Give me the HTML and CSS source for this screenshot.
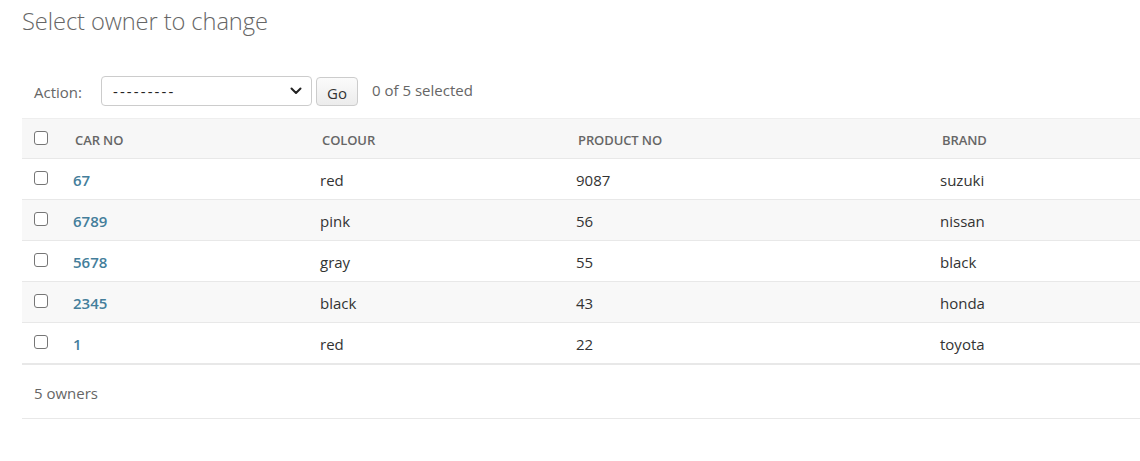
FILE: index.html
```html
<!DOCTYPE html>
<html lang="en">
<head>
<meta charset="utf-8">
<title>Select owner to change</title>
<link rel="stylesheet" href="styles.css">
</head>
<body>
<div class="content">
  <h1 class="title">Select owner to change</h1>
  <div class="changelist">
    <div class="actions">
      <label class="action-label">Action:</label>
      <div class="select">
        <span class="select-text">---------</span>
        <svg class="chev" width="12" height="8" viewBox="0 0 12 8"><path d="M1.5 1.5 L6 6 L10.5 1.5" fill="none" stroke="#222" stroke-width="2" stroke-linecap="round" stroke-linejoin="round"/></svg>
      </div>
      <button class="go">Go</button>
      <span class="counter">0 of 5 selected</span>
    </div>
    <table class="results">
      <thead>
        <tr>
          <th class="c-check"><span class="cb"></span></th>
          <th class="c-car">CAR NO</th>
          <th class="c-colour">COLOUR</th>
          <th class="c-product">PRODUCT NO</th>
          <th class="c-brand">BRAND</th>
        </tr>
      </thead>
      <tbody>
        <tr><td class="c-check"><span class="cb"></span></td><td><a class="link">67</a></td><td>red</td><td>9087</td><td>suzuki</td></tr>
        <tr class="alt"><td class="c-check"><span class="cb"></span></td><td><a class="link">6789</a></td><td>pink</td><td>56</td><td>nissan</td></tr>
        <tr><td class="c-check"><span class="cb"></span></td><td><a class="link">5678</a></td><td>gray</td><td>55</td><td>black</td></tr>
        <tr class="alt"><td class="c-check"><span class="cb"></span></td><td><a class="link">2345</a></td><td>black</td><td>43</td><td>honda</td></tr>
        <tr><td class="c-check"><span class="cb"></span></td><td><a class="link">1</a></td><td>red</td><td>22</td><td>toyota</td></tr>
      </tbody>
    </table>
    <p class="paginator">5 owners</p>
  </div>
</div>
</body>
</html>
```

FILE: styles.css
```css
html, body {
  margin: 0;
  padding: 0;
  background: #fff;
}
body {
  font-family: "Open Sans", "Noto Sans", sans-serif;
  font-size: 15px;
  color: #333;
}
.content {
  padding: 0 0 0 22px;
}
.title {
  margin: 0;
  padding-top: 4px;
  height: 62px;
  font-size: 23.7px;
  font-weight: 300;
  color: #666;
  line-height: 34px;
  letter-spacing: -0.1px;
}
.actions {
  display: flex;
  align-items: center;
  height: 52px;
  padding-left: 12px;
  color: #666;
}
.action-label {
  width: 67px;
  font-size: 15px;
  margin-top: 0;
}
.select {
  box-sizing: border-box;
  width: 211px;
  height: 30px;
  border: 1px solid #ccc;
  border-radius: 4px;
  display: flex;
  align-items: center;
  justify-content: space-between;
  padding: 0 9px 0 11px;
  color: #222;
  margin-top: -2px;
}
.select-text {
  letter-spacing: 2.1px;
}
.go {
  box-sizing: border-box;
  margin-left: 4px;
  width: 42px;
  height: 29px;
  border: 1px solid #ccc;
  border-radius: 4px;
  background: linear-gradient(#fbfbfb, #ececec);
  font-family: inherit;
  font-size: 15px;
  color: #333;
  padding: 2px 0 0 0;
  margin-top: -1px;
}
.counter {
  margin-left: 14px;
  margin-top: -5px;
}
.results {
  width: 100%;
  border-collapse: collapse;
}
.results th {
  height: 40px;
  box-sizing: border-box;
  background: #f7f7f7;
  border-top: 1px solid #eee;
  border-bottom: 1px solid #e8e8e8;
  text-align: left;
  font-size: 13px;
  font-weight: 600;
  color: #666;
  padding: 3px 0 0 13px;
  letter-spacing: -0.1px;
}
.results td {
  height: 41px;
  box-sizing: border-box;
  border-bottom: 1px solid #e8e8e8;
  padding: 1px 0 0 11px;
  vertical-align: middle;
}
.results tr.alt td {
  background: #f8f8f8;
}
.results .c-check {
  width: 40px;
  padding-left: 12px;
  box-sizing: border-box;
}
.c-car { width: 247px; }
.c-colour { width: 256px; }
.c-product { width: 364px; }
.cb {
  display: block;
  box-sizing: border-box;
  width: 14px;
  height: 14px;
  border: 1px solid #767676;
  border-radius: 3px;
  background: #fff;
  margin-top: -3px;
}
.results th .cb {
  margin-top: -5px;
}
.link {
  color: #447e9b;
  font-weight: 600;
}
.paginator {
  margin: 0;
  border-top: 1px solid #e8e8e8;
  border-bottom: 1px solid #e8e8e8;
  height: 53px;
  box-sizing: content-box;
  padding: 0 0 0 12px;
  line-height: 56px;
  color: #666;
}
```
